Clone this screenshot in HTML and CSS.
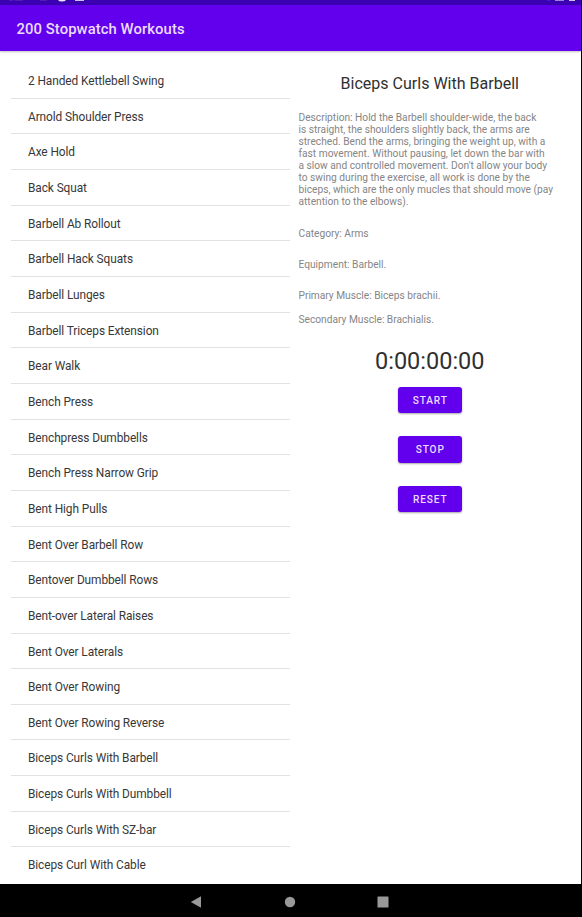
FILE: index.html
```html
<!DOCTYPE html>
<html lang="en">
<head>
<meta charset="utf-8">
<title>200 Stopwatch Workouts</title>
<link rel="stylesheet" href="styles.css">
</head>
<body>
<div class="screen">
  <div class="status">
    <svg width="581" height="5" viewBox="0 0 581 5"><g fill="#fff"><path d="M9 0h4v.8H9zM15 0h8v.7h-8zM40 0h7v.7h-7z" opacity=".15"/><path d="M58 0h8q-1 1.5-4 1.5T58 0z" opacity=".9"/><path d="M75 0h9v1h-9z" opacity=".75"/><path d="M547 0h3v.7h-3z" opacity=".15"/><path d="M555 0h9v1h-9z" opacity=".5"/><path d="M569 0h6v1h-6z" opacity=".75"/></g></svg>
  </div>
  <header class="appbar">200 Stopwatch Workouts</header>
  <main class="content">
    <ul class="list">
      <li>2 Handed Kettlebell Swing</li>
      <li>Arnold Shoulder Press</li>
      <li>Axe Hold</li>
      <li>Back Squat</li>
      <li>Barbell Ab Rollout</li>
      <li>Barbell Hack Squats</li>
      <li>Barbell Lunges</li>
      <li>Barbell Triceps Extension</li>
      <li>Bear Walk</li>
      <li>Bench Press</li>
      <li>Benchpress Dumbbells</li>
      <li>Bench Press Narrow Grip</li>
      <li>Bent High Pulls</li>
      <li>Bent Over Barbell Row</li>
      <li>Bentover Dumbbell Rows</li>
      <li>Bent-over Lateral Raises</li>
      <li>Bent Over Laterals</li>
      <li>Bent Over Rowing</li>
      <li>Bent Over Rowing Reverse</li>
      <li>Biceps Curls With Barbell</li>
      <li>Biceps Curls With Dumbbell</li>
      <li>Biceps Curls With SZ-bar</li>
      <li>Biceps Curl With Cable</li>
    </ul>
    <section class="detail">
      <h1>Biceps Curls With Barbell</h1>
      <p class="description">Description: Hold the Barbell shoulder-wide, the back<br>is straight, the shoulders slightly back, the arms are<br>streched. Bend the arms, bringing the weight up, with a<br>fast movement. Without pausing, let down the bar with<br>a slow and controlled movement. Don't allow your body<br>to swing during the exercise, all work is done by the<br>biceps, which are the only mucles that should move (pay<br>attention to the elbows).</p>
      <p class="category">Category: Arms</p>
      <p class="equipment">Equipment: Barbell.</p>
      <p class="primary">Primary Muscle: Biceps brachii.</p>
      <p class="secondary">Secondary Muscle: Brachialis.</p>
      <div class="timer">0:00:00:00</div>
      <div class="buttons">
        <button>START</button>
        <button>STOP</button>
        <button>RESET</button>
      </div>
    </section>
  </main>
  <nav class="navbar">
    <svg width="12" height="12" viewBox="0 0 12 12"><path d="M.8 6 11 .2v11.6z"/></svg>
    <svg width="12" height="12" viewBox="0 0 12 12"><circle cx="6" cy="6" r="5.2"/></svg>
    <svg width="12" height="12" viewBox="0 0 12 12"><rect x=".5" y=".5" width="11" height="11" rx=".6"/></svg>
  </nav>
</div>
</body>
</html>
```
FILE: styles.css
```css
* { box-sizing: border-box; }
body { margin: 0; background: #000; font-family: Roboto, sans-serif; }
.screen { width: 581px; height: 917px; display: flex; flex-direction: column; background: #fff; overflow: hidden; }
.status { height: 4.5px; flex: none; background: #3a00b2; overflow: hidden; }
.status svg { display: block; }
.appbar {
  height: 46.5px; flex: none; padding-left: 16.5px; line-height: 48px; z-index: 1;
  background: #6200ee; color: #eadcfd; font-size: 14.8px; font-weight: 500; letter-spacing: .09px;
  box-shadow: 0 1px 2px rgba(0, 0, 0, .25);
}
.content { flex: 1; min-height: 0; display: flex; overflow: hidden; }
.list { list-style: none; margin: 0; padding: 12px 0 0 11px; width: 290px; flex: none; }
.list li {
  height: 35.67px; padding-left: 17px; line-height: 36px; font-size: 11.9px; letter-spacing: -.09px;
  color: #383838; border-bottom: 1px solid #e2e2e2; white-space: nowrap;
}
.list li:last-child { border-bottom: 0; }
.detail { width: 279px; padding: 21px 0 0 8.5px; flex: none; }
.detail h1 { margin: 0 0 16px; height: 24px; line-height: 24px; font-size: 16.05px; font-weight: 400; color: #303030; text-align: center; padding-right: 8px; }
.detail p { margin: 0; line-height: 12px; font-size: 10.2px; color: #858585; white-space: nowrap; }
.detail .category { margin-top: 20px; }
.detail .equipment { margin-top: 19px; }
.detail .primary { margin-top: 19px; }
.detail .secondary { margin-top: 12px; }
.timer { margin-top: 20px; height: 30px; line-height: 30px; font-size: 23.5px; color: #303030; text-align: center; padding-right: 8px; }
.buttons { display: flex; flex-direction: column; align-items: center; gap: 23px; margin-top: 11px; padding-right: 8px; }
.buttons button {
  width: 64px; height: 26.4px; border: 0; border-radius: 3px; padding: 1px 0 0 1px; background: #6200ee; color: #eadcfd;
  font: 500 10.1px/26px Roboto, sans-serif; letter-spacing: .9px; box-shadow: 0 1px 2px rgba(0, 0, 0, .35);
}
.navbar { height: 33px; flex: none; background: #000; display: flex; justify-content: center; align-items: center; gap: 81.5px; padding: 2px 2px 0 0; }
.navbar svg { fill: #999; display: block; }
```
